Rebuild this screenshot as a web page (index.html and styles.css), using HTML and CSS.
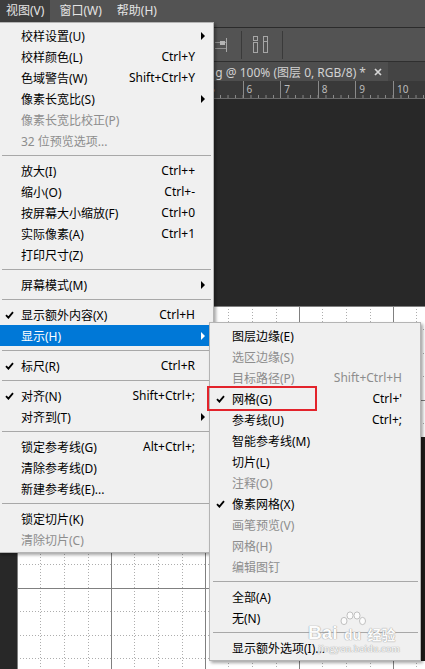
FILE: index.html
```html
<!DOCTYPE html>
<html lang="zh-CN">
<head>
    <meta charset="UTF-8">
    <meta name="viewport" content="width=device-width, initial-scale=1.0">
    <title>视图 - 显示 - 网格</title>
    <link rel="stylesheet" href="styles.css">
</head>
<body>
    <div class="app">
        <div class="menubar">
            <div class="menubar-item open">视图(V)</div>
            <div class="menubar-item">窗口(W)</div>
            <div class="menubar-item">帮助(H)</div>
        </div>

        <div class="optionsbar">
            <svg class="tool-icon" width="16" height="16" viewBox="0 0 16 16">
                <path d="M1.5 1v14" stroke="#a6a6a6" fill="none"/>
                <rect x="3.5" y="3.5" width="9" height="3" stroke="#a6a6a6" fill="none"/>
                <rect x="3" y="9" width="6" height="4" fill="#a6a6a6"/>
            </svg>
            <svg class="tool-icon icon-b" width="16" height="16" viewBox="0 0 16 16">
                <path d="M14.5 1v14" stroke="#a6a6a6" fill="none"/>
                <path d="M3 5.5h11M3 11.5h11" stroke="#8e8e8e" fill="none"/>
                <rect x="8" y="4" width="5" height="4" fill="#b4b4b4"/>
            </svg>
            <span class="tool-sep"></span>
            <svg class="tool-icon icon-c" width="16" height="17" viewBox="0 0 16 17">
                <rect x="0.5" y="0.5" width="4" height="4" stroke="#a6a6a6" fill="none"/>
                <rect x="0.5" y="6.5" width="4" height="10" stroke="#a6a6a6" fill="none"/>
                <rect x="10.5" y="0.5" width="4" height="16" stroke="#a6a6a6" fill="none"/>
                <path d="M10 5.5h5" stroke="#a6a6a6"/>
            </svg>
            <span class="tool-sep sep-c"></span>
        </div>

        <div class="tabbar">
            <div class="tab">
                <span class="tab-title">g @ 100% (图层 0, RGB/8) *</span>
                <svg class="tab-close" width="8" height="8" viewBox="0 0 8 8">
                    <path d="M1 1l6 6M7 1L1 7" stroke="#d6d6d6" stroke-width="1.7"/>
                </svg>
            </div>
        </div>

        <div class="ruler">
            <span class="ruler-cell"></span>
            <span class="ruler-cell"></span>
            <span class="ruler-cell"></span>
            <span class="ruler-cell"></span>
            <span class="ruler-cell"></span>
            <span class="ruler-cell">5</span>
            <span class="ruler-cell">6</span>
            <span class="ruler-cell">7</span>
            <span class="ruler-cell">8</span>
            <span class="ruler-cell">9</span>
            <span class="ruler-cell">10</span>
        </div>

        <div class="workspace">
            <div class="canvas">
                <svg class="grid" width="408" height="363">
                    <defs>
                        <pattern id="grid" width="94" height="94" patternUnits="userSpaceOnUse">
                            <path d="M23.5 0V94M47.5 0V94M71.5 0V94M0 23.5H94M0 47.5H94M0 70.5H94" stroke="#adadad" stroke-dasharray="1 2" fill="none"/>
                            <path d="M0.5 0V94M0 0.5H94" stroke="#808080" fill="none"/>
                        </pattern>
                    </defs>
                    <rect width="408" height="363" fill="url(#grid)"/>
                    <rect x="404" y="131" width="4" height="224" fill="#1f1c1a"/>
                </svg>
            </div>
        </div>
    </div>

    <!-- 视图菜单 -->
    <div class="menu menu-main">
        <div class="item"><span class="check"></span><span class="label">校样设置(U)</span><span class="arrow"></span></div>
        <div class="item"><span class="check"></span><span class="label">校样颜色(L)</span><span class="key">Ctrl+Y</span></div>
        <div class="item"><span class="check"></span><span class="label">色域警告(W)</span><span class="key">Shift+Ctrl+Y</span></div>
        <div class="item"><span class="check"></span><span class="label">像素长宽比(S)</span><span class="arrow"></span></div>
        <div class="item disabled"><span class="check"></span><span class="label">像素长宽比校正(P)</span></div>
        <div class="item disabled"><span class="check"></span><span class="label">32 位预览选项...</span></div>
        <div class="sep"></div>
        <div class="item"><span class="check"></span><span class="label">放大(I)</span><span class="key">Ctrl++</span></div>
        <div class="item"><span class="check"></span><span class="label">缩小(O)</span><span class="key">Ctrl+-</span></div>
        <div class="item"><span class="check"></span><span class="label">按屏幕大小缩放(F)</span><span class="key">Ctrl+0</span></div>
        <div class="item"><span class="check"></span><span class="label">实际像素(A)</span><span class="key">Ctrl+1</span></div>
        <div class="item"><span class="check"></span><span class="label">打印尺寸(Z)</span></div>
        <div class="sep"></div>
        <div class="item"><span class="check"></span><span class="label">屏幕模式(M)</span><span class="arrow"></span></div>
        <div class="sep"></div>
        <div class="item"><span class="check"><svg width="9" height="8" viewBox="0 0 9 8"><path d="M1 4.2l2.4 2.5L8 1.2" fill="none" stroke="currentColor" stroke-width="1.8"/></svg></span><span class="label">显示额外内容(X)</span><span class="key">Ctrl+H</span></div>
        <div class="item active"><span class="check"></span><span class="label">显示(H)</span><span class="arrow"></span></div>
        <div class="sep"></div>
        <div class="item"><span class="check"><svg width="9" height="8" viewBox="0 0 9 8"><path d="M1 4.2l2.4 2.5L8 1.2" fill="none" stroke="currentColor" stroke-width="1.8"/></svg></span><span class="label">标尺(R)</span><span class="key">Ctrl+R</span></div>
        <div class="sep"></div>
        <div class="item"><span class="check"><svg width="9" height="8" viewBox="0 0 9 8"><path d="M1 4.2l2.4 2.5L8 1.2" fill="none" stroke="currentColor" stroke-width="1.8"/></svg></span><span class="label">对齐(N)</span><span class="key">Shift+Ctrl+;</span></div>
        <div class="item"><span class="check"></span><span class="label">对齐到(T)</span><span class="arrow"></span></div>
        <div class="sep"></div>
        <div class="item"><span class="check"></span><span class="label">锁定参考线(G)</span><span class="key">Alt+Ctrl+;</span></div>
        <div class="item"><span class="check"></span><span class="label">清除参考线(D)</span></div>
        <div class="item"><span class="check"></span><span class="label">新建参考线(E)...</span></div>
        <div class="sep"></div>
        <div class="item"><span class="check"></span><span class="label">锁定切片(K)</span></div>
        <div class="item disabled"><span class="check"></span><span class="label">清除切片(C)</span></div>
    </div>

    <!-- 显示 子菜单 -->
    <div class="menu menu-sub">
        <div class="item"><span class="check"></span><span class="label">图层边缘(E)</span></div>
        <div class="item disabled"><span class="check"></span><span class="label">选区边缘(S)</span></div>
        <div class="item disabled"><span class="check"></span><span class="label">目标路径(P)</span><span class="key">Shift+Ctrl+H</span></div>
        <div class="item"><span class="check"><svg width="9" height="8" viewBox="0 0 9 8"><path d="M1 4.2l2.4 2.5L8 1.2" fill="none" stroke="currentColor" stroke-width="1.8"/></svg></span><span class="label">网格(G)</span><span class="key">Ctrl+'</span></div>
        <div class="item"><span class="check"></span><span class="label">参考线(U)</span><span class="key">Ctrl+;</span></div>
        <div class="item"><span class="check"></span><span class="label">智能参考线(M)</span></div>
        <div class="item"><span class="check"></span><span class="label">切片(L)</span></div>
        <div class="item disabled"><span class="check"></span><span class="label">注释(O)</span></div>
        <div class="item"><span class="check"><svg width="9" height="8" viewBox="0 0 9 8"><path d="M1 4.2l2.4 2.5L8 1.2" fill="none" stroke="currentColor" stroke-width="1.8"/></svg></span><span class="label">像素网格(X)</span></div>
        <div class="item disabled"><span class="check"></span><span class="label">画笔预览(V)</span></div>
        <div class="item disabled"><span class="check"></span><span class="label">网格(H)</span></div>
        <div class="item disabled"><span class="check"></span><span class="label">编辑图钉</span></div>
        <div class="sep"></div>
        <div class="item"><span class="check"></span><span class="label">全部(A)</span></div>
        <div class="item"><span class="check"></span><span class="label">无(N)</span></div>
        <div class="sep"></div>
        <div class="item"><span class="check"></span><span class="label">显示额外选项(I)...</span></div>
    </div>

    <div class="highlight-box"></div>

    <div class="watermark">
        <div class="wm-logo">
            <span class="wm-bai">Bai</span>
            <span class="wm-paw">
                <svg width="26" height="16" viewBox="0 0 26 16">
                    <ellipse cx="4" cy="10" rx="3" ry="3.6" fill="#fff" stroke="#b8b8b8"/>
                    <ellipse cx="10" cy="4.5" rx="3" ry="3.6" fill="#fff" stroke="#b8b8b8"/>
                    <ellipse cx="17" cy="4.5" rx="3" ry="3.6" fill="#fff" stroke="#b8b8b8"/>
                    <ellipse cx="22.5" cy="10" rx="3" ry="3.6" fill="#fff" stroke="#b8b8b8"/>
                </svg>
                <span class="wm-du">du</span>
            </span>
            <span class="wm-jy">经验</span>
        </div>
        <div class="wm-url">jingyan.baidu.com</div>
    </div>
</body>
</html>
```

FILE: styles.css
```css
* {
    box-sizing: border-box;
}

body {
    margin: 0;
    width: 425px;
    height: 669px;
    overflow: hidden;
    position: relative;
    background-color: #282828;
    font-family: "Noto Sans", "Noto Sans CJK SC", sans-serif;
    font-size: 12px;
}

.app {
    display: flex;
    flex-direction: column;
    height: 669px;
}

/* PHOTOSHOP CHROME */
.menubar {
    flex-shrink: 0;
    display: flex;
    align-items: flex-start;
    gap: 3px;
    height: 28px;
    background-color: #535353;
    border-bottom: 1px solid #2b2b2b;
}

.menubar-item {
    height: 22px;
    line-height: 22px;
    padding: 0 6px;
    color: #e4e4e4;
}

.menubar-item.open {
    background-color: #3e3e3e;
}

.optionsbar {
    flex-shrink: 0;
    display: flex;
    align-items: center;
    height: 34px;
    padding-left: 190px;
    background-color: #535353;
    border-bottom: 1px solid #2f2f2f;
}

.tool-icon {
    flex-shrink: 0;
}

.icon-b {
    margin-left: 6px;
}

.tool-sep {
    width: 1px;
    height: 28px;
    margin-left: 13px;
    background-color: #3a3a3a;
}

.icon-c {
    margin-left: 11px;
}

.sep-c {
    margin-left: 13px;
}

.tabbar {
    flex-shrink: 0;
    display: flex;
    height: 19px;
    background-color: #444;
}

.tab {
    display: flex;
    justify-content: flex-end;
    align-items: center;
    width: 388px;
    padding-right: 6px;
    overflow: hidden;
    white-space: nowrap;
    background-color: #4e4e4e;
    color: #d2d2d2;
}

.tab-close {
    margin-left: 8px;
}

.ruler {
    flex-shrink: 0;
    display: flex;
    height: 18px;
    padding-left: 17px;
    overflow: hidden;
    background-color: #393939;
    border-bottom: 1px solid #6a6a6a;
}

.ruler-cell {
    flex: 0 0 37.6px;
    padding: 3px 0 0 3px;
    border-left: 1px solid #8a8a8a;
    color: #bcbcbc;
    font-size: 10px;
    line-height: 1;
    background: linear-gradient(to right, #8a8a8a 1px, transparent 1px) 0 100% / 7.52px 3px repeat-x;
    background-origin: border-box;
}

.workspace {
    flex: 1;
    padding: 207px 0 0 17px;
}

.canvas {
    height: 363px;
    background-color: #fff;
}

.grid {
    display: block;
}

/* MENUS */
.menu {
    position: absolute;
    padding: 2px 0;
    background-color: #f0f0f0;
    border: 1px solid #b4b4b4;
    box-shadow: 2px 2px 3px rgba(0, 0, 0, 0.35);
    color: #000;
}

.menu-main {
    left: -2px;
    top: 22px;
    width: 216px;
}

.menu-sub {
    left: 209px;
    top: 322px;
    width: 212px;
}

.item {
    display: flex;
    align-items: center;
    height: 21px;
    padding-right: 18px;
    white-space: nowrap;
}

.check {
    display: flex;
    flex-shrink: 0;
    width: 22px;
    padding-left: 6px;
}

.label {
    flex: 1;
}

.arrow {
    width: 0;
    height: 0;
    margin-right: -10px;
    border-left: 4px solid #000;
    border-top: 4px solid transparent;
    border-bottom: 4px solid transparent;
}

.item.disabled {
    color: #8d8d8d;
}

.item.active {
    background-color: #0078d7;
    color: #fff;
}

.item.active .arrow {
    border-left-color: #fff;
}

.sep {
    height: 1px;
    margin: 4px 2px 4px 3px;
    background-color: #a8a8a8;
}

/* ANNOTATION */
.highlight-box {
    position: absolute;
    left: 207px;
    top: 386px;
    width: 110px;
    height: 25px;
    border: 2px solid #e3232b;
}

.watermark {
    position: absolute;
    left: 308px;
    top: 611px;
    opacity: 0.85;
    color: #fff;
    text-shadow: 0 0 1px #8e8e8e, 0 0 1px #8e8e8e;
}

.wm-logo {
    display: flex;
    align-items: flex-end;
}

.wm-bai {
    font-family: "Liberation Sans", sans-serif;
    font-weight: bold;
    font-size: 19px;
    line-height: 20px;
}

.wm-paw {
    display: flex;
    flex-direction: column;
    align-items: center;
    margin-left: 2px;
}

.wm-du {
    font-family: "Liberation Sans", sans-serif;
    font-weight: bold;
    font-size: 14px;
    line-height: 16px;
}

.wm-jy {
    margin-left: 2px;
    font-family: "Noto Sans CJK SC", sans-serif;
    font-weight: bold;
    font-size: 14px;
    line-height: 18px;
}

.wm-url {
    margin-left: 10px;
    font-family: "Liberation Serif", serif;
    font-size: 11px;
    line-height: 11px;
}
```
